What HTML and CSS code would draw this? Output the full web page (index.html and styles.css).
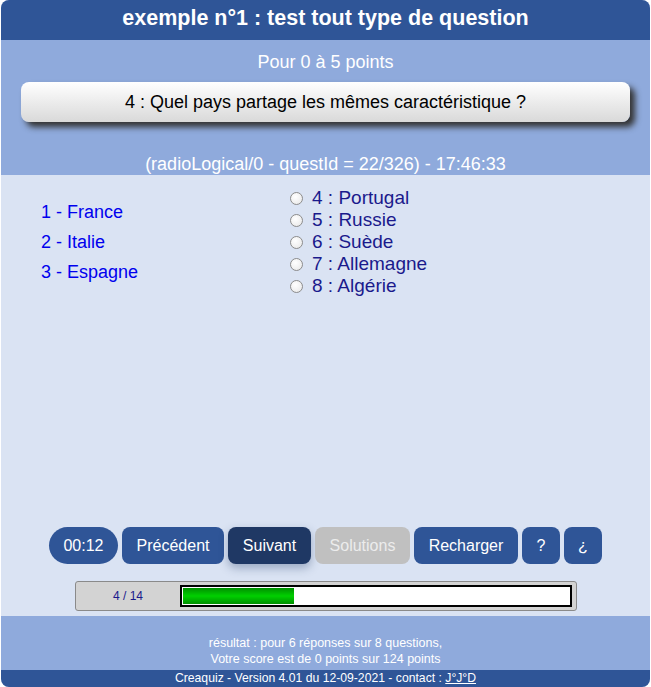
FILE: index.html
```html
<!DOCTYPE html>
<html lang="fr">
<head>
<meta charset="utf-8">
<title>Creaquiz</title>
<link rel="stylesheet" href="styles.css">
</head>
<body>
<div class="quiz">
  <header class="head">exemple n°1 : test tout type de question</header>
  <section class="intro">
    <div class="points">Pour 0 à 5 points</div>
    <div class="question">4 : Quel pays partage les mêmes caractéristique ?</div>
    <div class="meta">(radioLogical/0 - questId = 22/326) - 17:46:33</div>
  </section>
  <section class="body">
    <div class="answers">
      <ul class="list">
        <li>1 - France</li>
        <li>2 - Italie</li>
        <li>3 - Espagne</li>
      </ul>
      <div class="choices">
        <label class="choice"><span class="radio"></span>4 : Portugal</label>
        <label class="choice"><span class="radio"></span>5 : Russie</label>
        <label class="choice"><span class="radio"></span>6 : Suède</label>
        <label class="choice"><span class="radio"></span>7 : Allemagne</label>
        <label class="choice"><span class="radio"></span>8 : Algérie</label>
      </div>
    </div>
    <div class="buttons">
      <span class="btn timer">00:12</span>
      <span class="btn prev">Précédent</span>
      <span class="btn dark">Suivant</span>
      <span class="btn off">Solutions</span>
      <span class="btn reload">Recharger</span>
      <span class="btn sq">?</span>
      <span class="btn sq">¿</span>
    </div>
    <div class="progress">
      <span class="count">4 / 14</span>
      <div class="bar"><div class="fill" style="width:28.5%"></div></div>
    </div>
  </section>
  <section class="result">
    <div>résultat : pour 6 réponses sur 8 questions,</div>
    <div>Votre score est de 0 points sur 124 points</div>
  </section>
  <footer class="foot">Creaquiz - Version 4.01 du 12-09-2021 - contact : <a href="#">J°J°D</a></footer>
</div>
</body>
</html>
```
FILE: styles.css
```css
html, body {
  margin: 0;
  padding: 0;
  background: #ffffff;
}
body {
  font-family: "Liberation Sans", Arial, sans-serif;
}
.quiz {
  margin: 0 1px 0 1px;
  border-radius: 8px;
  overflow: hidden;
  background: #dae3f3;
}
.head {
  background: #2f5597;
  color: #fff;
  font-weight: bold;
  font-size: 21.5px;
  height: 40px;
  line-height: 37px;
  text-align: center;
}
.intro {
  background: #8faadc;
  height: 135px;
  padding: 0 20px 0 20px;
  color: #fff;
  text-align: center;
  display: flex;
  flex-direction: column;
}
.points {
  font-size: 18px;
  margin-top: 12px;
  line-height: 21px;
}
.question {
  margin: 9px 0 0 0;
  height: 40px;
  line-height: 40px;
  border-radius: 8px;
  background: linear-gradient(#ffffff, #d9d9d9);
  color: #000;
  font-size: 18px;
  box-shadow: 5px 5px 6px #333;
}
.meta {
  font-size: 18px;
  margin-top: 32px;
  line-height: 21px;
}
.body {
  height: 441px;
  display: flex;
  flex-direction: column;
}
.answers {
  display: flex;
  height: 352px;
}
.list {
  list-style: none;
  margin: 0;
  padding: 22px 0 0 40px;
  width: 249px;
  color: #0000ee;
  font-size: 18px;
}
.list li {
  line-height: 30px;
}
.choices {
  padding-top: 12px;
  display: flex;
  flex-direction: column;
  color: #1a1a8c;
  font-size: 19px;
}
.choice {
  display: flex;
  align-items: center;
  line-height: 22px;
}
.radio {
  width: 11px;
  height: 11px;
  border: 1px solid #8c8c8c;
  border-radius: 50%;
  background: radial-gradient(circle at 40% 35%, #ffffff, #e6e6e6);
  margin-right: 9px;
}
.buttons {
  display: flex;
  justify-content: center;
  gap: 4px;
}
.btn {
  background: #2f5597;
  color: #fff;
  font-size: 16px;
  height: 37px;
  line-height: 37px;
  border-radius: 8px;
  text-align: center;
  box-sizing: border-box;
}
.btn.timer {
  width: 69px;
  border-radius: 19px;
}
.btn.prev {
  width: 102px;
}
.btn.dark {
  width: 83px;
  background: #1f3864;
  box-shadow: 0 4px 10px rgba(31, 56, 100, 0.35);
}
.btn.off {
  width: 95px;
  background: #c0c0c0;
  color: #ececec;
}
.btn.reload {
  width: 104px;
}
.btn.sq {
  width: 38px;
}
.progress {
  margin: 17px 0 0 74px;
  width: 500px;
  height: 28px;
  border: 1px solid #8a8a8a;
  border-radius: 3px;
  background: #d3d3d3;
  display: flex;
  align-items: center;
}
.count {
  width: 104px;
  text-align: center;
  font-size: 12px;
  color: #1a1a8c;
}
.bar {
  width: 388px;
  height: 18px;
  border: 2px solid #000;
  background: #fff;
}
.fill {
  height: 16px;
  margin: 1px;
  background: linear-gradient(#009000, #00d000 50%, #009000);
}
.result {
  background: #8faadc;
  height: 54px;
  color: #fff;
  font-size: 12.5px;
  text-align: center;
  display: flex;
  flex-direction: column;
  justify-content: flex-end;
  line-height: 16px;
  padding-bottom: 3px;
  box-sizing: border-box;
}
.foot {
  background: #2f5597;
  color: #fff;
  font-size: 12.2px;
  text-align: center;
  height: 17px;
  line-height: 17px;
}
.foot a {
  color: #fff;
}
```
